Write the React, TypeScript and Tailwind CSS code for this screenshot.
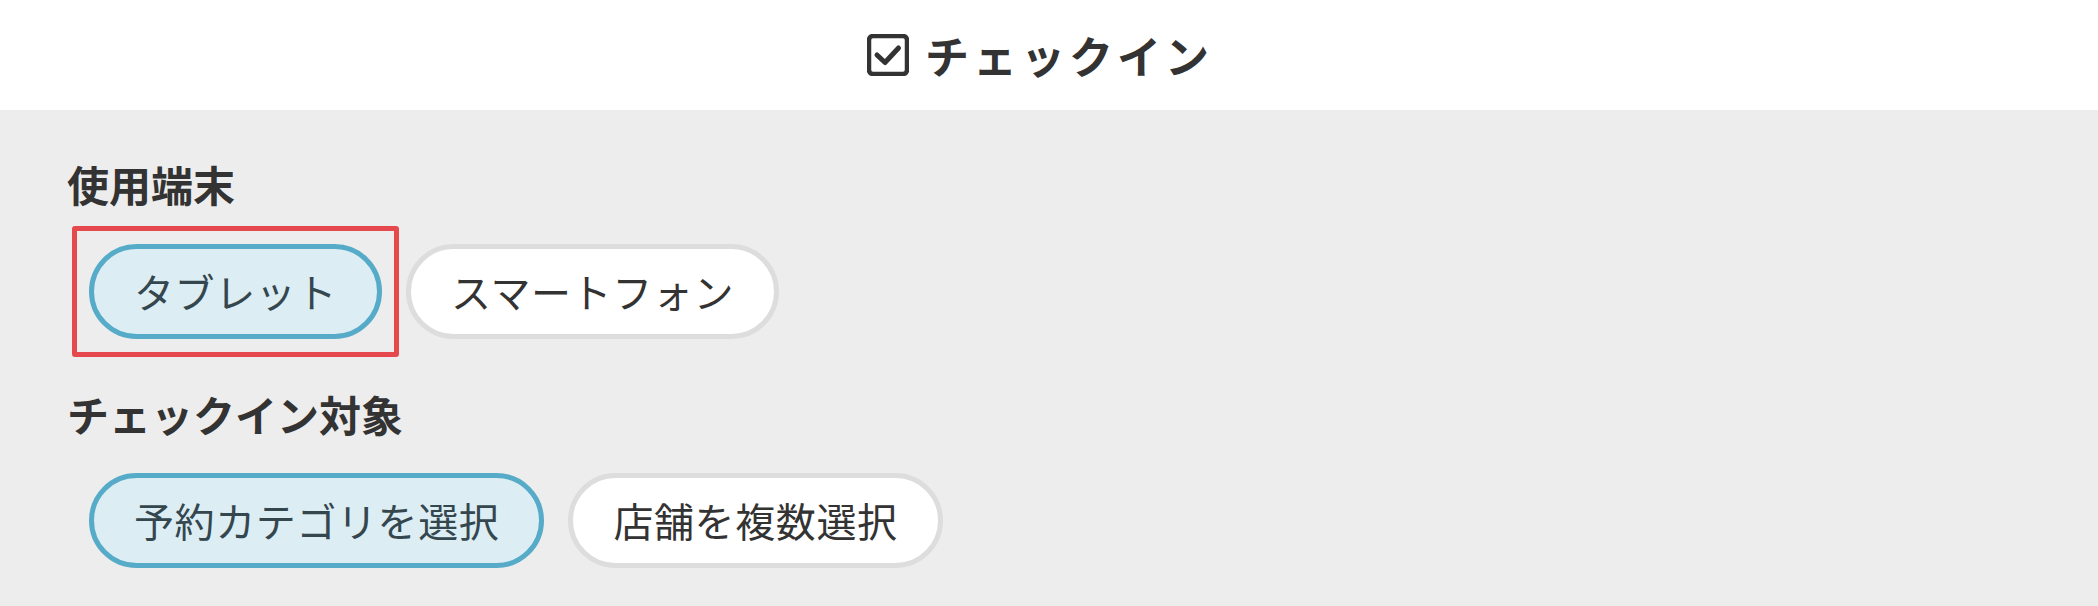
import React from "react";

const CheckSquareIcon: React.FC = () => (
  <svg width="42" height="42" viewBox="0 0 42 42" fill="none" aria-hidden>
    <rect x="2" y="2" width="38" height="38" rx="4" stroke="#333333" strokeWidth="4.5" />
    <path d="M10 21 L18 28.5 L31.5 14" stroke="#333333" strokeWidth="5" strokeLinecap="round" strokeLinejoin="round" />
  </svg>
);

type ChipProps = {
  label: string;
  selected?: boolean;
};

const Chip: React.FC<ChipProps> = ({ label, selected }) => (
  <button
    className={
      selected
        ? "rounded-full border-[5px] border-[#56abc8] bg-[#ddedf4] px-[40px] py-[20px] text-[40px] leading-[45px] tracking-[0.6px] text-[#34474f]"
        : "rounded-full border-[5px] border-[#dddddd] bg-white px-[40px] py-[20px] text-[40px] leading-[45px] tracking-[0.6px] text-[#333333]"
    }
  >
    {label}
  </button>
);

export default function App() {
  return (
    <div
      className="min-h-screen bg-[#ededed]"
      style={{ fontFamily: '"Noto Sans CJK JP", "Noto Sans", sans-serif' }}
    >
      <header className="flex h-[110px] items-center justify-center bg-white">
        <div className="flex items-center gap-4 pr-[18px]">
          <CheckSquareIcon />
          <h1 className="text-[44px] font-bold leading-none tracking-[4px] text-[#333333]">
            チェックイン
          </h1>
        </div>
      </header>

      <main className="px-[67px] pt-[44px]">
        <h2 className="text-[42px] font-bold leading-[60px] text-[#333333]">使用端末</h2>
        <div className="mt-[30px] ml-[22px] flex gap-6">
          <div className="relative">
            <Chip label="タブレット" selected />
            <span className="pointer-events-none absolute -inset-x-[17px] -inset-y-[18px] rounded-[3px] border-[5px] border-[#e5484d]" />
          </div>
          <Chip label="スマートフォン" />
        </div>

        <h2 className="mt-[45px] text-[42px] font-bold leading-[60px] text-[#333333]">
          チェックイン対象
        </h2>
        <div className="mt-[29px] ml-[22px] flex gap-6">
          <Chip label="予約カテゴリを選択" selected />
          <Chip label="店舗を複数選択" />
        </div>
      </main>
    </div>
  );
}
